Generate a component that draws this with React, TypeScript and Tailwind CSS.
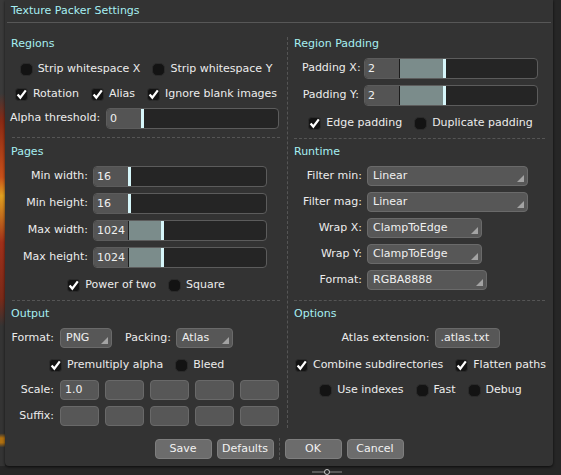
import type { ReactNode } from 'react';

function Header({ children }: { children: ReactNode }) {
  return <div className="h-[14px] leading-[14px] pl-[6px] text-[#a6eff2] whitespace-nowrap">{children}</div>;
}

function Dashed({ className = '' }: { className?: string }) {
  return <div className={`border-t border-dashed border-[#555555] ${className}`} />;
}

function Check({ label, checked }: { label: string; checked?: boolean }) {
  return (
    <div className="flex items-center gap-[5px] h-[14px]">
      {checked ? (
        <svg width="13" height="13" viewBox="0 0 13 13" className="shrink-0">
          <rect x="0.5" y="0.5" width="12" height="12" rx="3" fill="#131313" stroke="#2a2a2a" />
          <path d="M2.6 6.6 L5.3 9.6 L10.8 2.4" stroke="#ffffff" strokeWidth="2.3" fill="none" />
        </svg>
      ) : (
        <span className="w-[13px] h-[13px] shrink-0 rounded-[5px] bg-[#131313] border border-[#2a2a2a]" />
      )}
      <span className="leading-[14px] whitespace-nowrap text-[#ececec]">{label}</span>
    </div>
  );
}

function Slider({ value, fill, className }: { value: string; fill: number; className: string }) {
  return (
    <div className={`flex h-[21px] rounded-[4px] border border-[#5c5c5c] bg-[#252525] overflow-hidden ${className}`}>
      <div className="w-[34px] shrink-0 bg-[#545454] pl-[3px] leading-[19px] text-[#f0f0f0]">{value}</div>
      {fill > 0 && <div className="shrink-0 bg-[#7b8c8b] border-l border-[#1c1c1c]" style={{ width: fill }} />}
      <div className="w-[3px] shrink-0 bg-[#d6f6fa]" />
    </div>
  );
}

function Dropdown({ value, className }: { value: string; className: string }) {
  return (
    <div className={`relative h-[20px] rounded-[4px] border border-[#6a6a6a] bg-[#575757] pl-[5px] leading-[18px] text-[#efefef] whitespace-nowrap ${className}`}>
      {value}
      <svg width="7" height="7" viewBox="0 0 7 7" className="absolute right-[3px] bottom-[3px]">
        <polygon points="7,0 7,7 0,7" fill="#a3a3a3" />
      </svg>
    </div>
  );
}

function Field({ value = '', className }: { value?: string; className: string }) {
  return (
    <div className={`h-[20px] rounded-[4px] border border-[#696969] bg-[#575757] pl-[4px] leading-[18px] text-[#efefef] whitespace-nowrap ${className}`}>
      {value}
    </div>
  );
}

function Button({ children }: { children: ReactNode }) {
  return (
    <div className="w-[57px] h-[20px] rounded-[4px] border border-[#7e7e7e] bg-[#6c6c6c] text-center leading-[18px] text-[#f2f2f2]">
      {children}
    </div>
  );
}

function Label({ children, className }: { children: ReactNode; className: string }) {
  return <div className={`text-right whitespace-nowrap text-[#ececec] ${className}`}>{children}</div>;
}

export default function App() {
  return (
    <div className="relative w-[561px] h-[475px] overflow-hidden flex items-start bg-[#262626] font-['DejaVu_Sans',sans-serif] text-[11px]">
      <div className="w-[5px] h-[466px] shrink-0 bg-[linear-gradient(to_bottom,#3a3a3a_0%,#3a3a3a_20%,#8a2a14_26%,#c8501a_38%,#e0a020_42%,#a0301a_52%,#7a2a18_64%,#343434_70%,#343434_93%,#b07010_94%,#b07010_95%,#343434_96%)]" />

      <div className="w-[548px] h-[466px] shrink-0 flex flex-col bg-[#333333] rounded-b-[4px] shadow-[0_1px_3px_rgba(0,0,0,0.7)]">
        <div className="h-[22px] pl-[6px] leading-[22px] text-[#a6eff2]">Texture Packer Settings</div>
        <div className="mx-[2px] h-px bg-[#575757]" />

        <div className="flex mt-[14px] h-[391px]">
          {/* left column */}
          <div className="w-[282px] shrink-0 flex flex-col">
            <Header>Regions</Header>
            <div className="mt-[11px] flex justify-center gap-[12px]">
              <Check label="Strip whitespace X" />
              <Check label="Strip whitespace Y" />
            </div>
            <div className="mt-[11px] flex justify-center gap-[12px]">
              <Check label="Rotation" checked />
              <Check label="Alias" checked />
              <Check label="Ignore blank images" checked />
            </div>
            <div className="mt-[7px] flex items-center pl-[5px]">
              <Label className="w-[90px]">Alpha threshold:</Label>
              <Slider value="0" fill={0} className="ml-[6px] w-[173px]" />
            </div>
            <Dashed className="mt-[8px] mx-[7px]" />

            <div className="mt-[7px]">
              <Header>Pages</Header>
            </div>
            <div className="mt-[7px] flex flex-col gap-[6px]">
              {[
                ['Min width:', '16', 0],
                ['Min height:', '16', 0],
                ['Max width:', '1024', 33],
                ['Max height:', '1024', 33],
              ].map(([label, value, fill]) => (
                <div key={label as string} className="flex items-center pl-[15px]">
                  <Label className="w-[68px]">{label}</Label>
                  <Slider value={value as string} fill={fill as number} className="ml-[5px] w-[174px]" />
                </div>
              ))}
            </div>
            <div className="mt-[10px] flex justify-center gap-[12px]">
              <Check label="Power of two" checked />
              <Check label="Square" />
            </div>
            <Dashed className="mt-[8px] mx-[7px]" />

            <div className="mt-[6px]">
              <Header>Output</Header>
            </div>
            <div className="mt-[7px] flex items-center pl-[3px]">
              <Label className="w-[46px]">Format:</Label>
              <Dropdown value="PNG" className="ml-[6px] w-[52px]" />
              <div className="ml-[13px] whitespace-nowrap text-[#ececec]">Packing:</div>
              <Dropdown value="Atlas" className="ml-[5px] w-[57px]" />
            </div>
            <div className="mt-[10px] flex gap-[12px] pl-[44px]">
              <Check label="Premultiply alpha" checked />
              <Check label="Bleed" />
            </div>
            <div className="mt-[8px] flex items-center pl-[3px]">
              <Label className="w-[46px]">Scale:</Label>
              <div className="ml-[6px] flex gap-[6px]">
                <Field value="1.0" className="w-[39px]" />
                <Field className="w-[39px]" />
                <Field className="w-[39px]" />
                <Field className="w-[39px]" />
                <Field className="w-[39px]" />
              </div>
            </div>
            <div className="mt-[6px] flex items-center pl-[3px]">
              <Label className="w-[46px]">Suffix:</Label>
              <div className="ml-[6px] flex gap-[6px]">
                <Field className="w-[39px]" />
                <Field className="w-[39px]" />
                <Field className="w-[39px]" />
                <Field className="w-[39px]" />
                <Field className="w-[39px]" />
              </div>
            </div>
          </div>

          {/* right column */}
          <div className="w-[266px] shrink-0 flex flex-col border-l border-dashed border-[#555555]">
            <Header>Region Padding</Header>
            <div className="mt-[7px] flex flex-col gap-[6px]">
              {['Padding X:', 'Padding Y:'].map((label) => (
                <div key={label} className="flex items-center pl-[14px]">
                  <Label className="w-[57px]">{label}</Label>
                  <Slider value="2" fill={44} className="ml-[5px] w-[174px]" />
                </div>
              ))}
            </div>
            <div className="mt-[10px] flex justify-center gap-[12px]">
              <Check label="Edge padding" checked />
              <Check label="Duplicate padding" />
            </div>
            <Dashed className="mt-[8px] ml-[6px] mr-[8px]" />

            <div className="mt-[6px]">
              <Header>Runtime</Header>
            </div>
            <div className="mt-[7px] flex flex-col gap-[6px]">
              {[
                ['Filter min:', 'Linear', 'w-[161px]'],
                ['Filter mag:', 'Linear', 'w-[161px]'],
                ['Wrap X:', 'ClampToEdge', 'w-[115px]'],
                ['Wrap Y:', 'ClampToEdge', 'w-[115px]'],
                ['Format:', 'RGBA8888', 'w-[120px]'],
              ].map(([label, value, w]) => (
                <div key={label} className="flex items-center pl-[14px]">
                  <Label className="w-[60px]">{label}</Label>
                  <Dropdown value={value} className={`ml-[5px] ${w}`} />
                </div>
              ))}
            </div>
            <Dashed className="mt-[10px] ml-[6px] mr-[8px]" />

            <div className="mt-[6px]">
              <Header>Options</Header>
            </div>
            <div className="mt-[7px] flex items-center justify-center">
              <div className="whitespace-nowrap text-[#ececec]">Atlas extension:</div>
              <Field value=".atlas.txt" className="ml-[5px] w-[65px] pl-[5px]" />
            </div>
            <div className="mt-[10px] flex justify-center gap-[12px]">
              <Check label="Combine subdirectories" checked />
              <Check label="Flatten paths" checked />
            </div>
            <div className="mt-[11px] flex justify-center gap-[12px]">
              <Check label="Use indexes" />
              <Check label="Fast" />
              <Check label="Debug" />
            </div>
          </div>
        </div>

        <div className="mt-[10px] flex items-center justify-center">
          <Button>Save</Button>
          <div className="ml-[5px]">
            <Button>Defaults</Button>
          </div>
          <div className="ml-[5px] h-[22px] border-l border-dashed border-[#555555]" />
          <div className="ml-[5px]">
            <Button>OK</Button>
          </div>
          <div className="ml-[5px]">
            <Button>Cancel</Button>
          </div>
        </div>
      </div>

      <svg width="30" height="8" viewBox="0 0 30 8" className="absolute left-[312px] top-[468px]">
        <line x1="0" y1="4" x2="30" y2="4" stroke="#8a8a8a" strokeWidth="1" />
        <circle cx="15" cy="4" r="2.5" fill="#262626" stroke="#c8c8c8" strokeWidth="1" />
      </svg>
    </div>
  );
}
